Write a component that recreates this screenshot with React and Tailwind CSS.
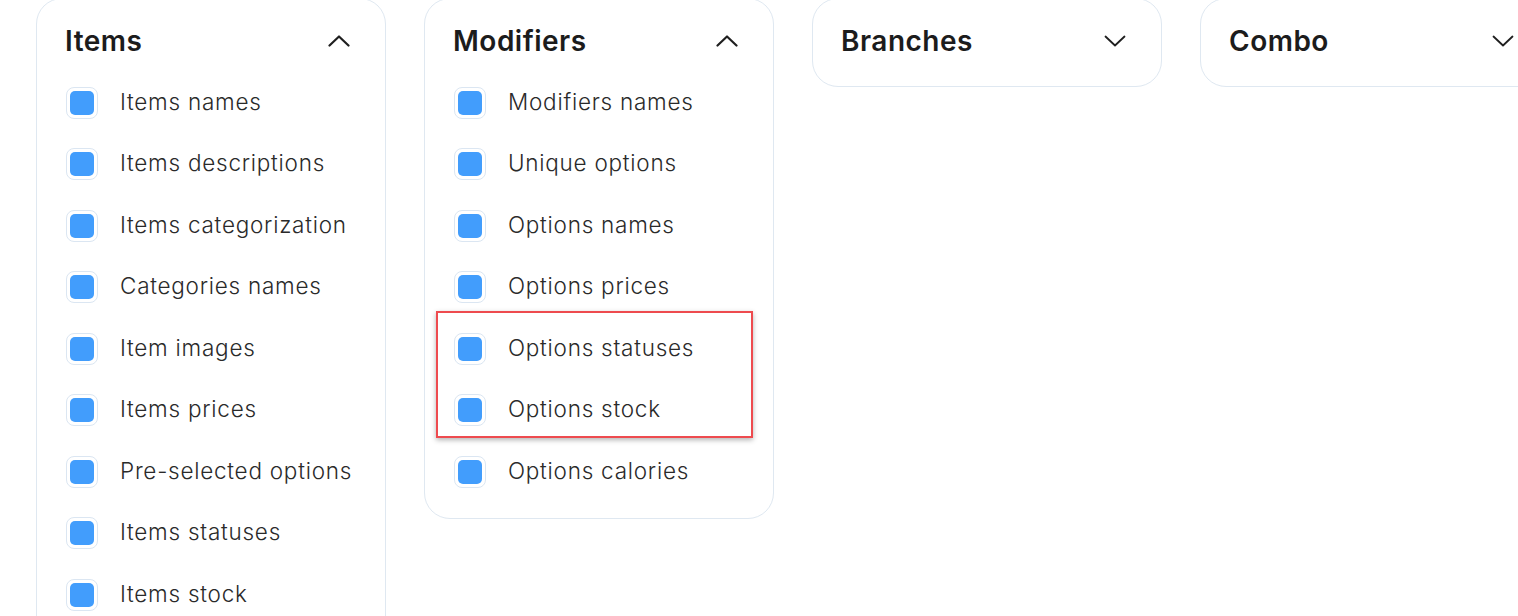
import React from "react";

const font = { fontFamily: "Inter, 'Noto Sans', sans-serif" };

function Chevron({ up }) {
  return (
    <svg width="22" height="12" viewBox="0 0 22 12" fill="none" className="shrink-0">
      {up ? (
        <path d="M1.5 10.5 L11 1.5 L20.5 10.5" stroke="#1f1f1f" strokeWidth="2.2" strokeLinecap="round" strokeLinejoin="round" />
      ) : (
        <path d="M1.5 1.5 L11 10.5 L20.5 1.5" stroke="#1f1f1f" strokeWidth="1.8" strokeLinecap="round" strokeLinejoin="round" />
      )}
    </svg>
  );
}

function Row({ label }) {
  return (
    <div className="flex h-[61.5px] items-center pl-[29px]">
      <div className="flex h-[32px] w-[32px] items-center justify-center rounded-[8px] border border-[#dbe6f2] bg-white">
        <div className="h-[24px] w-[24px] rounded-[5px] bg-[#429dfc]" />
      </div>
      <span className="ml-[22px] pb-[2px] text-[22.5px] font-[350] leading-none tracking-[0.75px] text-[#2a2a2a]">{label}</span>
    </div>
  );
}

function Card({ title, open, items, children }) {
  return (
    <div className="relative w-[350px] shrink-0 rounded-[26px] border border-[#dfe8f1] bg-white">
      <div className={`flex items-center justify-between pl-[28px] pr-[35px] pt-[26px] ${open ? "pb-[15px]" : "pb-[29px]"}`}>
        <span className="text-[28px] font-semibold leading-[32px] tracking-[0.5px] text-[#1c1c1c]">{title}</span>
        <Chevron up={open} />
      </div>
      {open && (
        <div className="pb-[15px]">
          {items.map((it) => (
            <Row key={it} label={it} />
          ))}
        </div>
      )}
      {children}
    </div>
  );
}

export default function App() {
  return (
    <div className="h-[616px] w-[1518px] overflow-hidden bg-white" style={font}>
      <div className="-mt-[2px] flex items-start gap-[38px] pl-[36px]">
        <Card
          title="Items"
          open
          items={[
            "Items names",
            "Items descriptions",
            "Items categorization",
            "Categories names",
            "Item images",
            "Items prices",
            "Pre-selected options",
            "Items statuses",
            "Items stock",
          ]}
        />
        <Card
          title="Modifiers"
          open
          items={[
            "Modifiers names",
            "Unique options",
            "Options names",
            "Options prices",
            "Options statuses",
            "Options stock",
            "Options calories",
          ]}
        >
          <div className="pointer-events-none absolute left-[11px] top-[312px] h-[127px] w-[317px] border-2 border-[#ee4b4f] shadow-[0_2px_5px_rgba(0,0,0,0.3)]" />
        </Card>
        <Card title="Branches" />
        <Card title="Combo" />
      </div>
    </div>
  );
}
